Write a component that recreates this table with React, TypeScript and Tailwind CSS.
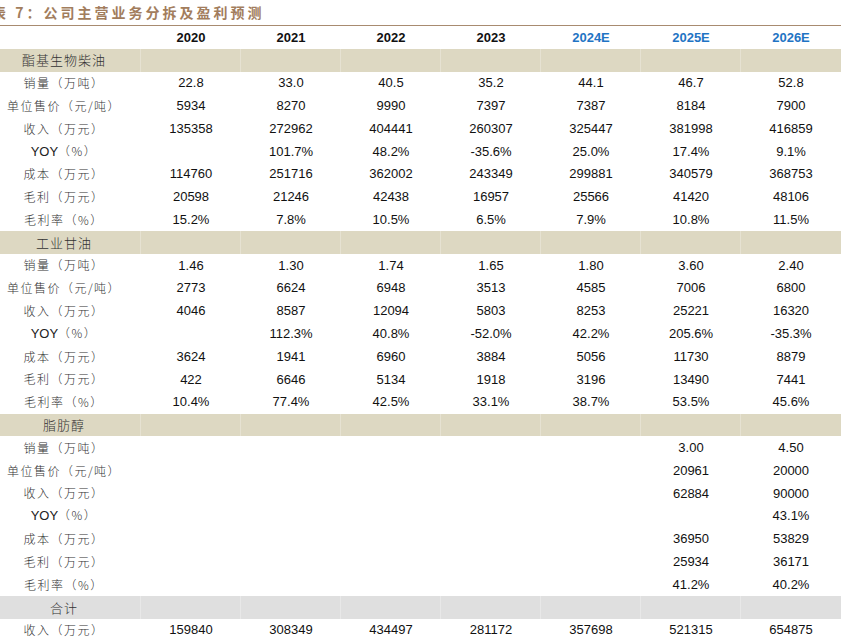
import React from 'react';

type Row = { label: string; values: string[] };
type Section = { name: string; tone: 'tan' | 'gray'; rows: Row[] };

const YEARS = ['2020', '2021', '2022', '2023', '2024E', '2025E', '2026E'];

const e = (...v: string[]) => [...Array(7 - v.length).fill(''), ...v];

const SECTIONS: Section[] = [
  {
    name: '酯基生物柴油',
    tone: 'tan',
    rows: [
      { label: '销量（万吨）', values: ['22.8', '33.0', '40.5', '35.2', '44.1', '46.7', '52.8'] },
      { label: '单位售价（元/吨）', values: ['5934', '8270', '9990', '7397', '7387', '8184', '7900'] },
      { label: '收入（万元）', values: ['135358', '272962', '404441', '260307', '325447', '381998', '416859'] },
      { label: 'YOY（%）', values: ['', '101.7%', '48.2%', '-35.6%', '25.0%', '17.4%', '9.1%'] },
      { label: '成本（万元）', values: ['114760', '251716', '362002', '243349', '299881', '340579', '368753'] },
      { label: '毛利（万元）', values: ['20598', '21246', '42438', '16957', '25566', '41420', '48106'] },
      { label: '毛利率（%）', values: ['15.2%', '7.8%', '10.5%', '6.5%', '7.9%', '10.8%', '11.5%'] },
    ],
  },
  {
    name: '工业甘油',
    tone: 'tan',
    rows: [
      { label: '销量（万吨）', values: ['1.46', '1.30', '1.74', '1.65', '1.80', '3.60', '2.40'] },
      { label: '单位售价（元/吨）', values: ['2773', '6624', '6948', '3513', '4585', '7006', '6800'] },
      { label: '收入（万元）', values: ['4046', '8587', '12094', '5803', '8253', '25221', '16320'] },
      { label: 'YOY（%）', values: ['', '112.3%', '40.8%', '-52.0%', '42.2%', '205.6%', '-35.3%'] },
      { label: '成本（万元）', values: ['3624', '1941', '6960', '3884', '5056', '11730', '8879'] },
      { label: '毛利（万元）', values: ['422', '6646', '5134', '1918', '3196', '13490', '7441'] },
      { label: '毛利率（%）', values: ['10.4%', '77.4%', '42.5%', '33.1%', '38.7%', '53.5%', '45.6%'] },
    ],
  },
  {
    name: '脂肪醇',
    tone: 'tan',
    rows: [
      { label: '销量（万吨）', values: e('3.00', '4.50') },
      { label: '单位售价（元/吨）', values: e('20961', '20000') },
      { label: '收入（万元）', values: e('62884', '90000') },
      { label: 'YOY（%）', values: e('43.1%') },
      { label: '成本（万元）', values: e('36950', '53829') },
      { label: '毛利（万元）', values: e('25934', '36171') },
      { label: '毛利率（%）', values: e('41.2%', '40.2%') },
    ],
  },
  {
    name: '合计',
    tone: 'gray',
    rows: [
      { label: '收入（万元）', values: ['159840', '308349', '434497', '281172', '357698', '521315', '654875'] },
    ],
  },
];

const GRID = 'grid grid-cols-[141px_repeat(7,100px)] h-[22.8px] items-center';
const CJK = "font-['Noto_Sans_CJK_SC',sans-serif]";
const NUM = "font-['Liberation_Sans',Arial,sans-serif]";

function Band({ name, tone }: { name: string; tone: 'tan' | 'gray' }) {
  const bg = tone === 'tan' ? 'bg-[#ddd8c2]' : 'bg-[#dfdfdf]';
  const line = tone === 'tan' ? 'border-[#e6e2d2]' : 'border-[#e8e8e8]';
  return (
    <div className={`${GRID} ${bg}`}>
      <div className={`h-full flex items-center justify-center pr-[12px] border-r ${line} ${CJK} font-light text-[13px] tracking-[1px] text-[#333]`}>
        {name}
      </div>
      {YEARS.map((y, i) => (
        <div key={y} className={`h-full ${i < 6 ? `border-r ${line}` : ''}`} />
      ))}
    </div>
  );
}

function Label({ text }: { text: string }) {
  // YOY 行的英文部分用 Arial 宽度的字体
  if (text.startsWith('YOY')) {
    return (
      <>
        <span className={`${NUM} text-[13px] tracking-normal text-[#222]`}>YOY</span>
        {text.slice(3)}
      </>
    );
  }
  return <>{text}</>;
}

function DataRow({ row }: { row: Row }) {
  return (
    <div className={GRID}>
      <div className={`text-center pr-[13px] ${CJK} font-light text-[12px] tracking-[1.5px] text-[#333] whitespace-nowrap`}>
        <Label text={row.label} />
      </div>
      {row.values.map((v, i) => (
        <div key={i} className={`text-center ${NUM} text-[13px] text-[#111]`}>
          {v}
        </div>
      ))}
    </div>
  );
}

export default function App() {
  return (
    <div className="w-[865px] h-[638px] bg-white overflow-hidden">
      <div className="w-[841px]">
        <div className={`h-[25px] flex items-center -ml-[8px] ${CJK} text-[14px] font-bold tracking-[3px] text-[#a27d5d] whitespace-nowrap`}>
          表 7：公司主营业务分拆及盈利预测
        </div>
        <div className="border-t border-[#a88b70]" />
        <div className={GRID}>
          <div />
          {YEARS.map((y) => (
            <div
              key={y}
              className={`text-center ${NUM} text-[13px] font-bold ${y.endsWith('E') ? 'text-[#1f74c4]' : 'text-[#111]'}`}
            >
              {y}
            </div>
          ))}
        </div>
        {SECTIONS.map((s) => (
          <div key={s.name}>
            <Band name={s.name} tone={s.tone} />
            {s.rows.map((r, i) => (
              <DataRow key={i} row={r} />
            ))}
          </div>
        ))}
      </div>
    </div>
  );
}
